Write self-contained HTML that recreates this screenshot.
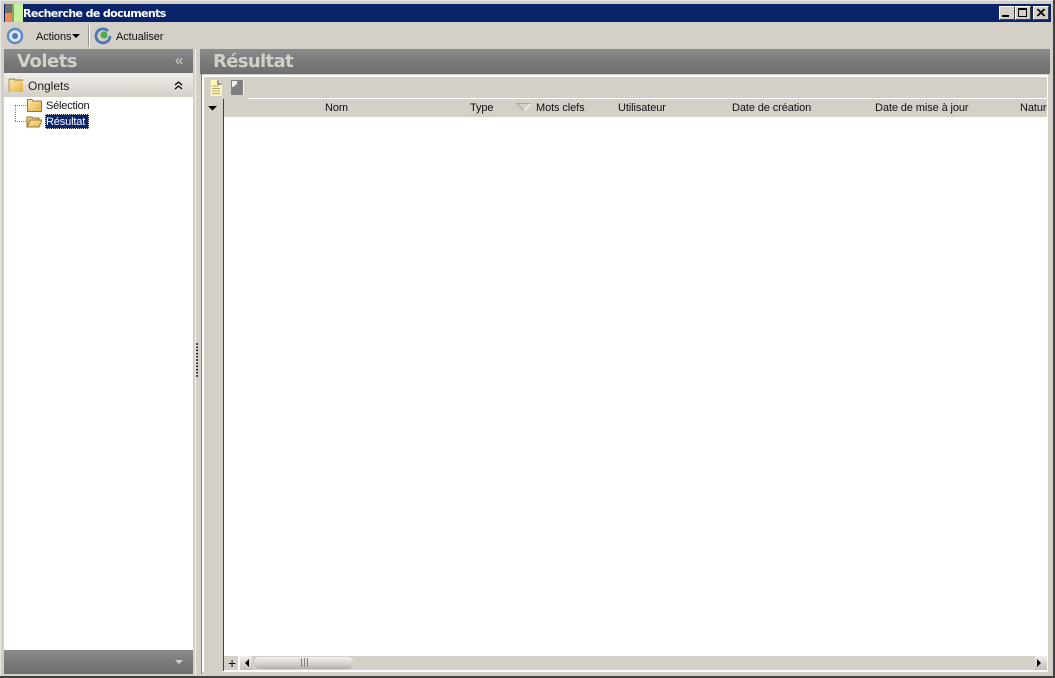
<!DOCTYPE html>
<html><head><meta charset="utf-8"><style>
html,body{margin:0;padding:0;background:#d4d0c8;}
#r{position:relative;width:1055px;height:678px;overflow:hidden;background:#d4d0c8;font:11px "Liberation Sans",sans-serif;color:#111;}
#r div,#r span.a,#r svg{position:absolute;}
.t{white-space:nowrap;line-height:13px;}
.h{background:linear-gradient(#8c8c8c,#7a7a7a 50%,#707070);}
.hd{top:102px;letter-spacing:-.1px;}
.b{width:16px;height:14px;background:#d4d0c8;border:1px solid;border-color:#fff #404040 #404040 #fff;box-sizing:border-box;}
</style></head><body><div id="r">
<div style="left:0;top:0;width:1055px;height:1px;background:#e8e6e0"></div>
<div style="left:0;top:0;width:1px;height:678px;background:#e8e6e0"></div>
<div style="left:1053px;top:0;width:2px;height:678px;background:#404040"></div>
<div style="left:0;top:676px;width:1055px;height:2px;background:#404040"></div>

<div style="left:4px;top:4px;width:1047px;height:18px;background:#0a246a"></div>
<svg style="left:5px;top:4px" width="18" height="18"><rect width="8" height="9" fill="#6e6e6e"/><rect x="8" width="10" height="18" fill="#c4f0a0"/><rect x="0" y="9" width="8" height="9" fill="#f08850"/><rect x="7" y="0" width="2" height="18" fill="#90a060"/></svg>
<div class="t" style="left:23px;top:7px;color:#fff;font:bold 11px/13px 'DejaVu Sans',sans-serif;letter-spacing:-.62px">Recherche de documents</div>
<div class="b" style="left:999px;top:6px"></div><div style="left:1002px;top:15px;width:7px;height:2px;background:#000"></div>
<div class="b" style="left:1015px;top:6px"></div><div style="left:1018px;top:8px;width:9px;height:9px;border:1px solid #000;border-top-width:2px;box-sizing:border-box"></div>
<div class="b" style="left:1033px;top:6px"></div>
<svg style="left:1036px;top:8px" width="10" height="10"><path d="M1 1L8 8M2 1L9 8M8 1L1 8M9 1L2 8" stroke="#000" stroke-width="1"/></svg>

<svg style="left:6px;top:27px" width="18" height="18"><circle cx="9" cy="9" r="7" fill="#dfe6f2" stroke="#5c88c8" stroke-width="2.400"/><circle cx="9" cy="9" r="3" fill="#4c78c0"/></svg>
<div class="t" style="left:36px;top:31px;letter-spacing:-.1px">Actions</div>
<svg style="left:72px;top:34px" width="9" height="5"><path d="M0 0H8L4 4Z" fill="#000"/></svg>
<div style="left:88px;top:25px;width:1px;height:22px;background:#909090"></div>
<div style="left:89px;top:25px;width:1px;height:22px;background:#fff"></div>
<svg style="left:94px;top:27px" width="18" height="18"><path d="M14 4A7 7 0 1 0 16 9" fill="none" stroke="#4c78b8" stroke-width="2.800"/><circle cx="10" cy="8" r="3.600" fill="#50a848"/></svg>
<div class="t" style="left:116px;top:31px;letter-spacing:-.1px">Actualiser</div>

<div class="h" style="left:4px;top:49px;width:189px;height:24px"></div>
<div class="t" style="left:17px;top:52px;font:bold 18px/20px 'DejaVu Sans',sans-serif;letter-spacing:-.5px;color:#d4d0c8">Volets</div>
<div class="t" style="left:175px;top:53px;font-size:15px;line-height:15px;color:#d4d0c8">«</div>

<div style="left:4px;top:73px;width:189px;height:24px;background:linear-gradient(#f0eeea,#d4d0c8)"></div>
<svg style="left:8px;top:78px" width="16" height="14"><defs><linearGradient id="g" x1="0" y1="0" x2="1" y2="1"><stop offset="0" stop-color="#fbeab0"/><stop offset="1" stop-color="#e8b040"/></linearGradient></defs><path d="M1 1H6L7 2H15V14H1Z" fill="url(#g)"/><path d="M1 1H6L7 2H15" fill="none" stroke="#8a7a50"/><path d="M1 1V14" stroke="#a89868"/></svg>
<div class="t" style="left:28px;top:80px;font-size:12px;color:#222">Onglets</div>
<svg style="left:174px;top:81px" width="9" height="10"><path d="M1 4L4.500 1L8 4M1 8L4.500 5L8 8" fill="none" stroke="#000" stroke-width="1.200"/></svg>

<div style="left:4px;top:97px;width:189px;height:553px;background:#fff"></div>
<div style="left:15px;top:105px;width:0;height:16px;border-left:1px dotted #808080"></div>
<div style="left:15px;top:105px;width:11px;height:0;border-top:1px dotted #808080"></div>
<div style="left:15px;top:121px;width:11px;height:0;border-top:1px dotted #808080"></div>
<svg style="left:26px;top:98px" width="16" height="14"><path d="M1.500 1.500H6L7 3H15.500V13.500H1.500Z" fill="url(#g)" stroke="#8a7a50"/></svg>
<div class="t" style="left:46px;top:100px;letter-spacing:-.2px">Sélection</div>
<svg style="left:26px;top:114px" width="16" height="14"><path d="M1 3H6L7 4H13V6H4L1 13Z" fill="#f0d080" stroke="#907830"/><path d="M4 6H16L13 13H1Z" fill="url(#g)" stroke="#907830"/></svg>
<div style="left:45px;top:114px;width:44px;height:15px;background:#0a246a;outline:1px dotted #d4d0c8;outline-offset:-1px"></div>
<div class="t" style="left:46px;top:116px;color:#fff;letter-spacing:-.15px">Résultat</div>

<div class="h" style="left:4px;top:650px;width:189px;height:24px"></div>
<svg style="left:175px;top:660px" width="9" height="6"><path d="M0 0H8L4 4Z" fill="#d4d0c8"/></svg>

<div style="left:195px;top:49px;width:1px;height:627px;background:#f0eeea"></div>
<svg style="left:195px;top:343px" width="4" height="36"><path d="M1 1H3M1 4.200H3M1 7.400H3M1 10.600H3M1 13.800H3M1 17H3M1 20.200H3M1 23.400H3M1 26.600H3M1 29.800H3M1 33H3" stroke="#000" stroke-width="1.200" stroke-dasharray="none"/></svg>

<div class="h" style="left:200px;top:49px;width:850px;height:25px"></div>
<div class="t" style="left:213px;top:52px;font:bold 18px/20px 'DejaVu Sans',sans-serif;letter-spacing:-.65px;color:#d4d0c8">Résultat</div>

<div style="left:201px;top:74px;width:1px;height:600px;background:#808080"></div>
<div style="left:202px;top:75px;width:846px;height:597px;background:#fff"></div>
<div style="left:204px;top:77px;width:843px;height:21px;background:#d4d0c8"></div>
<div style="left:248px;top:98px;width:799px;height:1px;background:#fff"></div>
<div style="left:204px;top:98px;width:44px;height:1px;background:#d4d0c8"></div>
<svg style="left:209px;top:80px" width="14" height="16"><path d="M1 0H9L13 4V16H1Z" fill="#fdf4b8"/><path d="M3 6H10M3 8.500H11M3 11H11M3 13.500H11" stroke="#b0a878"/><path d="M9 .5V4H12.500" fill="#fff" stroke="#303060"/><path d="M1 0V16" stroke="#c8c8c0"/></svg>
<svg style="left:231px;top:80px" width="13" height="16"><rect width="13" height="15" fill="#808080"/><path d="M1 1H6V4L2 7H1Z" fill="#f0f0f0"/><rect x="12" width="1" height="15" fill="#f4f4f4"/></svg>

<div style="left:204px;top:99px;width:19px;height:573px;background:#d4d0c8"></div>
<div style="left:223px;top:99px;width:1px;height:572px;background:#404040"></div>
<svg style="left:208px;top:106px" width="9" height="5"><path d="M0 0H9L4.500 4.500Z" fill="#000"/></svg>

<div style="left:224px;top:99px;width:823px;height:18px;background:#d4d0c8"></div>
<div class="t hd" style="left:325px">Nom</div>
<div class="t hd" style="left:470px">Type</div>
<svg style="left:516px;top:103px" width="16" height="9"><path d="M.5 .5H15L8 8Z" fill="#d4d0c8" stroke="#a8a8a8"/><path d="M15 .5L8 8" stroke="#fff"/></svg>
<div class="t hd" style="left:536px">Mots clefs</div>
<div class="t hd" style="left:618px">Utilisateur</div>
<div class="t hd" style="left:732px">Date de création</div>
<div class="t hd" style="left:875px">Date de mise à jour</div>
<div class="t hd" style="left:1020px;width:27px;overflow:hidden">Nature</div>

<div style="left:224px;top:656px;width:823px;height:14px;background:#d4d0c8"></div>
<div style="left:238px;top:656px;width:2px;height:14px;background:#fff"></div>
<div class="t" style="left:228px;top:656px;font-size:14px;line-height:14px">+</div>
<div style="left:240px;top:656px;width:12px;height:14px;background:linear-gradient(#f0eeea,#c4c0b8)"></div>
<svg style="left:245px;top:659px" width="5" height="8"><path d="M4 0V8L0 4Z" fill="#000"/></svg>
<div style="left:254px;top:657px;width:99px;height:12px;border-radius:5px;background:linear-gradient(#f4f2ee,#d4d0c8 60%,#b4b0a8)"></div>
<svg style="left:301px;top:658px" width="8" height="10"><path d="M.5 0V9M3.500 0V9M6.500 0V9" stroke="#808080"/></svg>
<div style="left:1035px;top:656px;width:12px;height:14px;background:linear-gradient(#f0eeea,#c4c0b8)"></div>
<svg style="left:1037px;top:659px" width="5" height="8"><path d="M0 0V8L4 4Z" fill="#000"/></svg>
</div></body></html>
